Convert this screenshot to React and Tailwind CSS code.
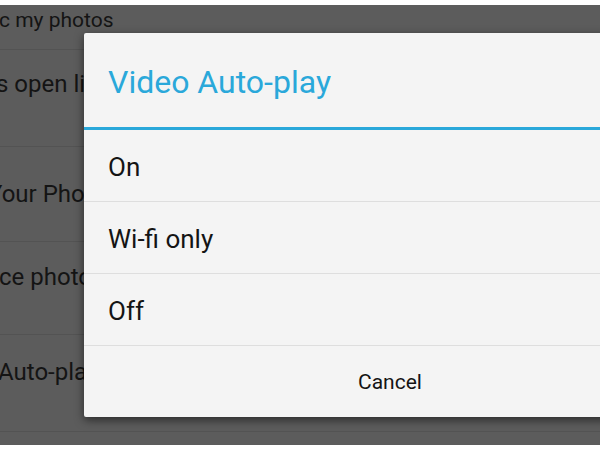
import React from "react";

const rows = [
    {text: "c my photos", h: "h-[45px]", pad: "pb-[12px]", size: "text-[21px]", shift: "ml-[-1px]"},
    {text: "s open links", h: "h-[97px]", pad: "pb-[28px]", size: "text-[24px]", shift: "ml-[-4px]"},
    {text: "Your Photos", h: "h-[95px]", pad: "pb-0", size: "text-[24px]", shift: "ml-[-12px]"},
    {text: "ce photos", h: "h-[93px]", pad: "pb-[22px]", size: "text-[24px]", shift: "ml-[-1px]"},
    {text: "Auto-play", h: "h-[97px]", pad: "pb-[22px]", size: "text-[24px]", shift: "ml-[-2px]"},
];

const options = ["On", "Wi-fi only", "Off"];

export default function App() {
    return (
        <div className="relative w-[600px] h-[450px] bg-white overflow-hidden font-['Roboto','Liberation_Sans',sans-serif]">

            {/* Dimmed settings list behind the dialog */}
            <div className="mt-[5px] h-[440px] bg-[#5c5c5c] flex flex-col">
                {rows.map((row) => (
                    <div key={row.text} className={`${row.h} ${row.pad} shrink-0 flex items-center border-b border-[#535353] overflow-hidden`}>
                        <span className={`${row.size} ${row.shift} text-[#141414] whitespace-nowrap`}>{row.text}</span>
                    </div>
                ))}
            </div>

            {/* Dialog */}
            <div className="absolute left-[84px] top-[33px] w-[612px] bg-[#f4f4f4] rounded-[2px] shadow-[0_3px_10px_rgba(0,0,0,0.55)] flex flex-col">
                <div className="h-[94px] flex items-center pl-6 pt-[4px]">
                    <h2 className="text-[32px] text-[#2aa8da]">Video Auto-play</h2>
                </div>
                <div className="h-[3px] bg-[#2aa8da]"></div>

                {options.map((opt) => (
                    <div key={opt} className="h-[72px] flex items-center pl-6 pt-[4px] border-b border-[#dedede]">
                        <span className="text-[26px] text-[#141414]">{opt}</span>
                    </div>
                ))}

                <div className="h-[71px] flex items-center justify-center pt-[3px]">
                    <span className="text-[21px] text-[#141414]">Cancel</span>
                </div>
            </div>
        </div>
    );
}
